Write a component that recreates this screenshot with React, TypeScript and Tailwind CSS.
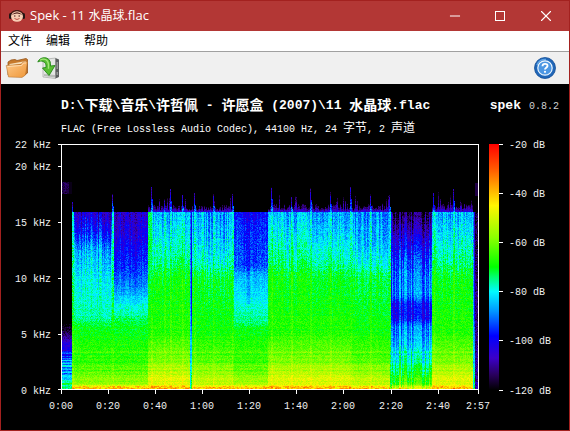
import { Minus, X } from 'lucide-react';

type Stop = [number, number, number, number];
type Profile = [number, number][];

const PALETTE: Stop[] = [
  [0, 255, 0, 0],
  [0.1, 255, 88, 0],
  [0.25, 255, 245, 0],
  [0.38, 140, 255, 0],
  [0.5, 0, 255, 0],
  [0.54, 0, 255, 110],
  [0.6, 0, 250, 255],
  [0.68, 0, 150, 255],
  [0.78, 0, 0, 255],
  [0.87, 60, 0, 200],
  [0.94, 40, 0, 90],
  [1, 0, 0, 0],
];

// plot area inside the chart's coordinates
const PLOT = { left: 60, top: 60, width: 417, height: 245 };
const CUTOFF = 68;
const LEVELS = 64;

// [row, level] pairs, 0 is the loudest level and 1 is silence
const LOUD: Profile = [
  [68, 0.66], [92, 0.61], [116, 0.56], [132, 0.5], [186, 0.475], [206, 0.42],
  [226, 0.35], [238, 0.29], [242, 0.25], [245, 0.22],
];
const MEDIUM: Profile = [
  [68, 0.68], [100, 0.64], [118, 0.59], [132, 0.52], [186, 0.49], [210, 0.44],
  [230, 0.37], [240, 0.31], [245, 0.22],
];
const SOFT: Profile = [
  [68, 0.85], [88, 0.77], [108, 0.66], [136, 0.6], [174, 0.56], [184, 0.5],
  [226, 0.44], [238, 0.38], [241, 0.3], [245, 0.22],
];
const QUIET: Profile = [
  [68, 0.86], [96, 0.82], [120, 0.76], [142, 0.69], [160, 0.6], [182, 0.51],
  [226, 0.44], [238, 0.38], [241, 0.3], [245, 0.22],
];
const HOLLOW: Profile = [
  [68, 0.78], [84, 0.74], [122, 0.72], [130, 0.65], [150, 0.61], [168, 0.57],
  [178, 0.55], [184, 0.5], [226, 0.43], [238, 0.36], [245, 0.22],
];
const BREAKDOWN: Profile = [
  [68, 0.95], [84, 0.88], [96, 0.82], [114, 0.75], [130, 0.7], [150, 0.68],
  [160, 0.78], [174, 0.79], [182, 0.69], [200, 0.65], [212, 0.58], [228, 0.52],
  [238, 0.45], [245, 0.28],
];
const INTRO: Profile = [
  [180, 1], [190, 0.93], [198, 0.85], [208, 0.79], [214, 0.68], [232, 0.65],
  [238, 0.56], [245, 0.5],
];
const GAP: Profile = [[68, 0.8], [170, 0.78], [190, 0.68], [220, 0.6], [245, 0.48]];
const FADE: Profile = [[68, 0.7], [180, 0.66], [245, 0.6]];

const SECTIONS: { until: number; profile: Profile; fringe: number; stripes: number }[] = [
  { until: 11, profile: INTRO, fringe: 0, stripes: 0.03 },
  { until: 51, profile: SOFT, fringe: 0, stripes: 0.14 },
  { until: 87, profile: QUIET, fringe: 0, stripes: 0.08 },
  { until: 129, profile: LOUD, fringe: 5, stripes: 0.08 },
  { until: 130, profile: FADE, fringe: 4, stripes: 0 },
  { until: 131, profile: GAP, fringe: 3, stripes: 0 },
  { until: 172, profile: MEDIUM, fringe: 5, stripes: 0.12 },
  { until: 207, profile: HOLLOW, fringe: 0, stripes: 0.05 },
  { until: 289, profile: LOUD, fringe: 6, stripes: 0.09 },
  { until: 329, profile: MEDIUM, fringe: 5, stripes: 0.12 },
  { until: 331, profile: GAP, fringe: 0, stripes: 0.04 },
  { until: 371, profile: BREAKDOWN, fringe: 0, stripes: 0.13 },
  { until: 412, profile: LOUD, fringe: 6, stripes: 0.09 },
  { until: 413, profile: FADE, fringe: 0, stripes: 0.05 },
  { until: 414, profile: GAP, fringe: 0, stripes: 0.05 },
  { until: 417, profile: [[0, 1], [245, 0.95]], fringe: 0, stripes: 0.02 },
];

// column: first visible row
const BEATS: Record<number, number> = {
  11: 57, 51: 49, 90: 42, 103: 54, 109: 44, 121: 50, 133: 48, 152: 49, 171: 49,
  210: 42, 230: 52, 249: 43, 269: 47, 289: 42, 309: 49, 328: 50, 372: 48, 392: 44,
};

const noise = (x: number, y: number) => {
  let n = Math.imul(x + 11, 374761393) ^ Math.imul(y + 7, 668265263);
  n = Math.imul(n ^ (n >>> 13), 1274126177);
  return ((n ^ (n >>> 16)) >>> 0) / 4294967295;
};

const interpolate = (profile: Profile, row: number) => {
  if (row <= profile[0][0]) return profile[0][1];
  for (let i = 1; i < profile.length; i++) {
    const [end, to] = profile[i];
    const [start, from] = profile[i - 1];
    if (row <= end) return from + ((to - from) * (row - start)) / (end - start);
  }
  return profile[profile.length - 1][1];
};

const colorAt = (level: number) => {
  const i = Math.max(1, PALETTE.findIndex(([at]) => at >= level));
  const [start, ...from] = PALETTE[i - 1];
  const [end, ...to] = PALETTE[i];
  const k = (level - start) / (end - start);
  return `rgb(${from.map((c, n) => Math.round(c + (to[n] - c) * k)).join(',')})`;
};

const levelAt = (x: number, y: number) => {
  const section = SECTIONS.find(({ until }) => x < until)!;
  const beat = BEATS[x] ?? BEATS[x - 1];
  const grain = noise(x, y) - 0.5;

  if (x < 11 && y > 37 && y < 50) return x < 8 ? 0.95 + grain * 0.06 : 0.98;
  if (x > 413) {
    if (y > 38 && y < 52) return 0.95;
    return y < CUTOFF ? 1 : 0.99 - (y / PLOT.height) * 0.1 + grain * 0.1;
  }
  if (x < 11 && y < 180) return 1;

  if (y < CUTOFF && x >= 11) {
    if (beat !== undefined && y > beat + (BEATS[x] ? 0 : 12)) {
      return 0.92 - ((y - beat) / (CUTOFF - beat)) * 0.24 + grain * 0.16;
    }
    const height = section.fringe * (0.5 + noise(x, 900) * (noise(x, 901) > 0.85 ? 3 : 1));
    if (y > CUTOFF - height) return 0.96 - ((y - CUTOFF + height) / height) * 0.14 + grain * 0.08;
    return 1;
  }

  let level = interpolate(section.profile, y);
  const high = Math.min(1, Math.max(0.08, (190 - y) / 100));
  level += (noise(x, 500) - 0.5) * section.stripes * (section.profile === BREAKDOWN ? 1 : high);
  level += (noise(x >> 2, 600) - 0.5) * 0.04 * high;
  level += grain * (y < 132 ? 0.09 : 0.07);
  level += (noise(0, y) - 0.5) * (y > 205 ? 0.06 : 0.02);
  if (x < 11 && y > 205) level += (noise(3, y) - 0.5) * 0.16;
  if (section.profile === HOLLOW && y < 160) {
    // a quieter dip in the middle of the section
    level += Math.max(0, 1 - Math.abs(x - 187) / (y < 122 ? 6 : 3)) * 0.07;
  }
  if (beat !== undefined && x !== 328) {
    level = Math.min(level - 0.025, 0.6 - Math.min(0.1, (y - CUTOFF) * 0.001) + grain * 0.12);
  }
  if (x > 86 && x < 91) level = Math.min(level, 0.53 + grain * 0.06);
  if (y > 241 && x >= 11) level -= noise(x >> 1, y) * 0.12;
  return level;
};

// one path for each palette level, made of vertical runs
const buildSpectrogram = () => {
  const paths: string[] = Array(LEVELS + 1).fill('');
  const bucket = (x: number, y: number) =>
    Math.round(Math.min(1, Math.max(0, levelAt(x, y))) * LEVELS);

  for (let x = 0; x < PLOT.width; x++) {
    let start = 0;
    let current = bucket(x, 0);
    for (let y = 1; y <= PLOT.height; y++) {
      const next = y < PLOT.height ? bucket(x, y) : -1;
      if (next === current) continue;
      if (current < LEVELS) paths[current] += `M${x} ${start}h1v${y - start}h-1z`;
      start = y;
      current = next;
    }
  }
  return paths;
};

const SPECTROGRAM = buildSpectrogram();

const FREQUENCIES = [
  { label: '22 kHz', y: 60 },
  { label: '20 kHz', y: 82 },
  { label: '15 kHz', y: 138 },
  { label: '10 kHz', y: 194 },
  { label: '5 kHz', y: 250 },
  { label: '0 kHz', y: 306 },
];

const TIMES = [
  { label: '0:00', x: 60 },
  { label: '0:20', x: 107 },
  { label: '0:40', x: 154 },
  { label: '1:00', x: 201 },
  { label: '1:20', x: 248 },
  { label: '1:40', x: 295 },
  { label: '2:00', x: 342 },
  { label: '2:20', x: 390 },
  { label: '2:40', x: 437 },
  { label: '2:57', x: 477 },
];

const DENSITIES = [
  { label: '-20 dB', y: 60 },
  { label: '-40 dB', y: 109 },
  { label: '-60 dB', y: 158 },
  { label: '-80 dB', y: 207 },
  { label: '-100 dB', y: 256 },
  { label: '-120 dB', y: 306 },
];

const MENUS = ['文件', '编辑', '帮助'];

export default function App() {
  return (
    <div className="border border-[#a3211f] bg-black font-['Open_Sans','Noto_Sans_CJK_SC',sans-serif]">
      <TitleBar />
      <nav className="flex h-5 items-center bg-white text-xs text-black">
        {MENUS.map((menu) => (
          <button key={menu} type="button" className="px-[7px] leading-5">
            {menu}
          </button>
        ))}
      </nav>
      <Toolbar />
      <main className="relative font-['Liberation_Mono','Noto_Sans_CJK_SC',monospace] text-white">
        <Chart />
        <header className="absolute inset-x-0 top-0 flex justify-between pt-3 pr-[10px] pl-[60px]">
          <div>
            <h1 className="flex h-5 items-center text-[13px] font-bold whitespace-pre">
              <MixedText text="D:\下载\音乐\许哲佩 - 许愿盒 (2007)\11 水晶球.flac" cjkClass="text-[14px]" />
            </h1>
            <p className="mt-[3px] flex h-5 items-center text-[10px] whitespace-pre">
              <MixedText
                text="FLAC (Free Lossless Audio Codec), 44100 Hz, 24 字节, 2 声道"
                cjkClass="text-[12px]"
              />
            </p>
          </div>
          <p className="flex h-5 items-center gap-2">
            <b className="text-[13px]">spek</b>
            <span className="text-[10px] text-[#d0d0d0]">0.8.2</span>
          </p>
        </header>
      </main>
    </div>
  );
}

const TitleBar = () => (
  <div className="flex h-[30px] items-center bg-[#b33735] text-white">
    <FaceIcon />
    <span className="flex flex-1 items-center text-[13px] whitespace-pre">
      <MixedText text="Spek - 11 水晶球.flac" cjkClass="text-[12px]" />
    </span>
    <button type="button" aria-label="Minimize" className="flex w-[45px] justify-center">
      <Minus className="size-4" strokeWidth={1.5} />
    </button>
    <button type="button" aria-label="Maximize" className="flex w-[46px] justify-center">
      <span className="size-[10px] border border-white" />
    </button>
    <button type="button" aria-label="Close" className="flex w-[46px] justify-center">
      <X className="size-[18px]" strokeWidth={1.5} />
    </button>
  </div>
);

const Toolbar = () => (
  <div className="flex h-[33px] items-center gap-2 border-t border-[#a0a0a0] bg-[#f0f0f0] pr-[13px] pl-1">
    <button type="button" aria-label="Open">
      <FolderIcon />
    </button>
    <button type="button" aria-label="Save">
      <SaveIcon />
    </button>
    <button type="button" aria-label="Help" className="ml-auto">
      <HelpIcon />
    </button>
  </div>
);

// CJK glyphs get a size of their own
const MixedText = ({ text, cjkClass }: { text: string; cjkClass: string }) => (
  <>
    {text.split(/([\u4e00-\u9fff]+)/).map((part, index) => (
      <span key={index} className={index % 2 ? cjkClass : undefined}>
        {part}
      </span>
    ))}
  </>
);

const Chart = () => (
  <svg
    viewBox="0 0 568 346"
    className="block h-auto w-full text-[10px]"
    role="img"
    aria-label="Spectrogram"
  >
    <defs>
      <linearGradient id="density" x1="0" y1="0" x2="0" y2="1">
        {PALETTE.map(([at]) => (
          <stop key={at} offset={at} stopColor={colorAt(at)} />
        ))}
      </linearGradient>
    </defs>

    <g transform={`translate(${PLOT.left} ${PLOT.top})`} shapeRendering="crispEdges">
      {SPECTROGRAM.map((d, level) => (
        <path key={level} d={d} fill={colorAt(level / LEVELS)} />
      ))}
    </g>
    <rect x="60.5" y="60.5" width="417" height="245" fill="none" stroke="#fff" />

    {FREQUENCIES.map(({ label, y }) => (
      <g key={label}>
        <rect x="57" y={Math.min(y, 305)} width="3" height="1" fill="#fff" />
        <text x="50" y={y + 4} textAnchor="end" fill="#f0f0f0">
          {label}
        </text>
      </g>
    ))}

    {TIMES.map(({ label, x }) => (
      <g key={label}>
        <rect x={x} y="306" width="1" height="4" fill="#fff" />
        <text x={x} y="325" textAnchor="middle" fill="#f0f0f0">
          {label}
        </text>
      </g>
    ))}

    <rect x="488" y="60" width="10" height="246" fill="url(#density)" />
    {DENSITIES.map(({ label, y }) => (
      <g key={label}>
        <rect x="498" y={y} width="4" height="1" fill="#fff" />
        <text x="508" y={y + 4} fill="#f0f0f0">
          {label}
        </text>
      </g>
    ))}
  </svg>
);

const FaceIcon = () => (
  <svg viewBox="0 0 18 16" className="mr-[4px] ml-[7px] h-4 w-[18px]" aria-hidden="true">
    <path d="M2 8C2 0 16 0 16 8" fill="#4a1a16" />
    <rect x="1" y="5" width="3" height="6" rx="1.5" fill="#231413" />
    <rect x="14" y="5" width="3" height="6" rx="1.5" fill="#231413" />
    <ellipse cx="9" cy="8.500" rx="6" ry="5.200" fill="#f8cdb4" />
    <path d="M3.500 7Q9 1.500 14.500 7 9 4 3.500 7z" fill="#4a1a16" />
    <circle cx="6.800" cy="8" r=".8" fill="#57312b" />
    <circle cx="11.200" cy="8" r=".8" fill="#57312b" />
    <path d="M6.500 10.500q2.500 2 5 0" fill="none" stroke="#b5443c" strokeWidth=".9" />
  </svg>
);

const FolderIcon = () => (
  <svg viewBox="0 0 24 24" className="size-6" aria-hidden="true">
    <defs>
      <linearGradient id="folder" x1="0" y1="0" x2="1" y2="1">
        <stop offset="0" stopColor="#ffcb8c" />
        <stop offset="1" stopColor="#ee9638" />
      </linearGradient>
    </defs>
    <path d="M3 19V6l3-2 4-.500 2 1L21 2.500l1.500 1V17L18 20z" fill="#c77a2c" stroke="#95561c" strokeWidth=".8" />
    <path d="M4.500 8L21 5v2L4.500 9.500z" fill="#f8dfb8" />
    <path
      d="M1.200 9.500L16 8.500l2-2.500 4.500-.5L20.500 19 17 21.500 3.500 21z"
      fill="url(#folder)"
      stroke="#a9642180"
      strokeWidth=".9"
    />
    <path d="M2.500 10.500l14-1 2-2.500h2.500" stroke="#ffe6c4" strokeWidth=".8" fill="none" />
  </svg>
);

const SaveIcon = () => (
  <svg viewBox="0 0 24 24" className="size-6" aria-hidden="true">
    <path d="M6 3.500L18.500 2v20.500L6 21z" fill="#e4e6e4" stroke="#a6a8a6" strokeWidth=".7" />
    <path d="M18.500 2l3.500 1.500V21l-3.500 1.500z" fill="#5a5d5e" />
    <path d="M20.200 6v7M20.200 16v3" stroke="#b2b5b6" />
    <path d="M7 18l11 1v2.500L7 20z" fill="#b8bbb8" />
    <path
      d="M.800 6C3 0 13 0 13.500 7.500V10l4.500-.5L12 19.500 5.500 12l3.500-.5V9C8.500 5.500 4 4 .800 6z"
      fill="#58bd32"
      stroke="#258618"
      strokeWidth=".9"
    />
    <path d="M3 4.200c4-2.500 8-.7 8.500 4.300v4.300" fill="none" stroke="#a2e778" strokeWidth="1.300" />
  </svg>
);

const HelpIcon = () => (
  <svg viewBox="0 0 22 22" className="size-[22px]" aria-hidden="true">
    <circle cx="11" cy="11" r="10.500" fill="#1f66b8" stroke="#174f96" strokeWidth=".8" />
    <path d="M3 8a8.500 8.500 0 0 1 9-5.500" fill="none" stroke="#5fa4e6" strokeWidth="1.500" />
    <circle cx="11" cy="11" r="7.200" fill="#4d97e3" stroke="#eef7ff" strokeWidth="1.200" />
    <path
      d="M8.500 9.200C8.500 6 13.700 6.200 13.500 8.900c-.1 1.700-2.500 2-2.500 3.600"
      fill="none"
      stroke="#fff"
      strokeWidth="1.900"
    />
    <circle cx="11" cy="14.800" r="1.100" fill="#fff" />
  </svg>
);
